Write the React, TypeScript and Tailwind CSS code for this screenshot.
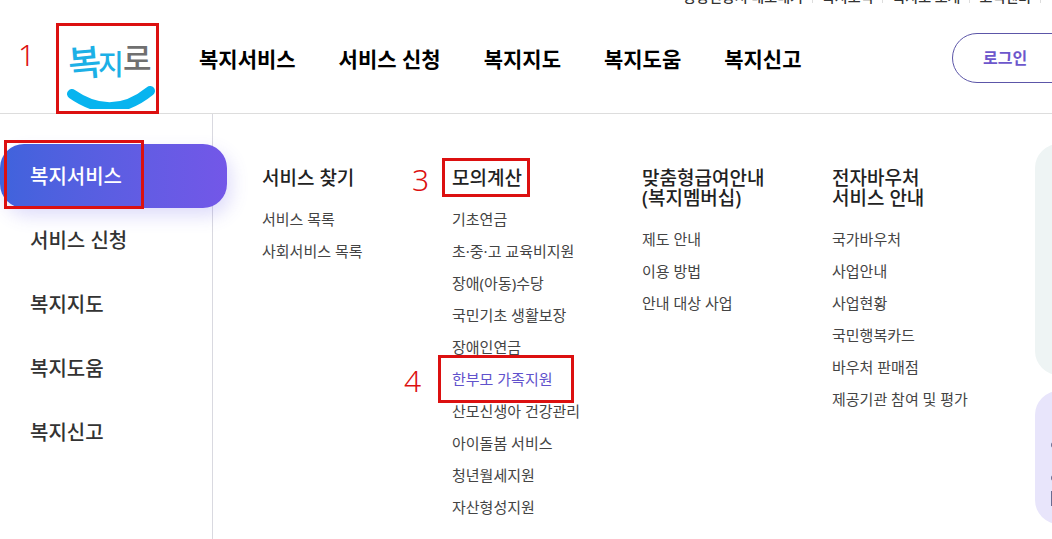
import type { ReactNode } from 'react';

const utilityLinks = ['공동인증서 내보내기', '복지소식', '복지로 소개', '고객센터'];

const mainMenu = ['복지서비스', '서비스 신청', '복지지도', '복지도움', '복지신고'];

const columns = [
  { title: ['서비스 찾기'], items: ['서비스 목록', '사회서비스 목록'] },
  {
    title: ['모의계산'],
    mark: '3',
    items: [
      '기초연금',
      '초·중·고 교육비지원',
      '장애(아동)수당',
      '국민기초 생활보장',
      '장애인연금',
      '한부모 가족지원',
      '산모신생아 건강관리',
      '아이돌봄 서비스',
      '청년월세지원',
      '자산형성지원',
    ],
  },
  { title: ['맞춤형급여안내', '(복지멤버십)'], items: ['제도 안내', '이용 방법', '안내 대상 사업'] },
  {
    title: ['전자바우처', '서비스 안내'],
    items: ['국가바우처', '사업안내', '사업현황', '국민행복카드', '바우처 판매점', '제공기관 참여 및 평가'],
  },
];

// Red guide box laid over the element it points at
function Box({ className }: { className: string }) {
  return <span aria-hidden="true" className={`absolute z-10 border-3 border-[#dc1010] pointer-events-none ${className}`} />;
}

function Step({ className, children }: { className: string; children: ReactNode }) {
  return <span className={`absolute z-10 text-[30px] leading-8 font-light text-[#dc1010] ${className}`}>{children}</span>;
}

function Logo() {
  return (
    <svg width="96" height="86" viewBox="0 0 96 86" role="img" aria-label="복지로">
      <g fontWeight="500" fill="#1cb0e6">
        <text x="8" y="53" fontSize="36" transform="rotate(-5 24 38)">복</text>
        <text x="38" y="52" fontSize="28">지</text>
        <text x="63" y="47" fontSize="31" fill="#707070">로</text>
      </g>
      <path d="M12 71 Q52 99 90 68" fill="none" stroke="#08b4ef" strokeWidth="10" strokeLinecap="round" />
    </svg>
  );
}

export default function App() {
  return (
    <div className="relative min-h-screen flex flex-col overflow-hidden bg-white font-['Noto_Sans','Noto_Sans_CJK_KR',sans-serif] text-[#333]">
      <header className="relative border-b border-[#ddd]">
        <div className="h-[7px] flex items-end justify-end overflow-hidden">
          <ul className="flex shrink-0 pr-0.5 text-sm leading-5 font-medium">
            {utilityLinks.map((label) => (
              <li key={label} className="flex items-center whitespace-nowrap after:content-[''] after:w-px after:h-3 after:mx-[9px] after:bg-[#ddd]">
                <a href="#">{label}</a>
              </li>
            ))}
          </ul>
        </div>
        <div className="h-[106px] flex items-center">
          <div className="relative w-[199px] h-full shrink-0 pl-15 pt-4">
            <Step className="left-[18px] top-8">1</Step>
            <a href="#" className="block"><Logo /></a>
            <Box className="left-14 top-4 w-[103px] h-[91px]" />
          </div>
          <nav aria-label="주 메뉴" className="flex gap-[43px] pb-0.5 text-[21px] leading-8 font-bold text-black whitespace-nowrap">
            {mainMenu.map((label) => (
              <a key={label} href="#">{label}</a>
            ))}
          </nav>
          <button className="ml-auto -mr-8 mb-1 w-33 h-[50px] shrink-0 rounded-full border border-[#5c56a8] pl-[30px] text-left font-bold text-[#6d57cc]">
            로그인
          </button>
        </div>
      </header>

      <main className="flex grow">
        <aside className="w-[213px] shrink-0 border-r border-[#d9d9e0] pt-[30px]">
          <ul className="text-xl font-medium">
            {mainMenu.map((label, i) => (
              <li key={label} className="relative">
                <a
                  href="#"
                  className={
                    i === 0
                      ? 'flex items-center h-16 pt-0.5 -mr-[15px] pl-[30px] rounded-3xl bg-linear-to-r from-[#3f63dc] to-[#7357e8] text-white shadow-[4px_8px_18px_rgba(90,80,230,0.2)]'
                      : 'flex items-center h-16 pt-0.5 pl-[30px]'
                  }
                >
                  {label}
                </a>
                {i === 0 && <Box className="left-1 -top-1 w-[140px] h-[69px]" />}
              </li>
            ))}
          </ul>
        </aside>

        <section className="flex grow pl-[49px] pt-[54px]">
          {columns.map((col) => (
            <div key={col.title[0]} className="w-[190px] shrink-0">
              <h2 className="relative w-fit text-[19px] leading-5 font-medium text-[#222]">
                {'mark' in col && (
                  <>
                    <Step className="-left-10 -top-1">{col.mark}</Step>
                    <Box className="-left-2.5 -top-2.5 w-[88px] h-[39px]" />
                  </>
                )}
                {col.title.map((line) => (
                  <span key={line} className="block whitespace-nowrap">{line}</span>
                ))}
              </h2>
              <ul className="mt-[15px] text-[15px] leading-8 text-[#444]">
                {col.items.map((item) => (
                  <li key={item} className="relative whitespace-nowrap">
                    {item === '한부모 가족지원' ? (
                      <>
                        <Step className="-left-12 top-0.5">4</Step>
                        <Box className="-left-3.5 -top-2 w-[136px] h-12" />
                        <a href="#" className="text-[#6152cc]">{item}</a>
                      </>
                    ) : (
                      <a href="#">{item}</a>
                    )}
                  </li>
                ))}
              </ul>
            </div>
          ))}
        </section>

        <div className="w-[17px] shrink-0 pt-[30px] flex flex-col gap-4">
          <div className="h-[231px] w-12 rounded-3xl bg-[#eef4f4]" />
          <div className="h-[133px] w-12 rounded-3xl bg-[#e8e5fb] pl-4 pt-[50px]">
            <svg width="20" height="66" viewBox="0 0 20 66" fill="#6a6d92" aria-hidden="true">
              <circle cx="3" cy="4" r="3" />
              <circle cx="3" cy="37" r="3" />
              <rect y="50" width="3" height="15" />
            </svg>
          </div>
        </div>
      </main>
    </div>
  );
}
